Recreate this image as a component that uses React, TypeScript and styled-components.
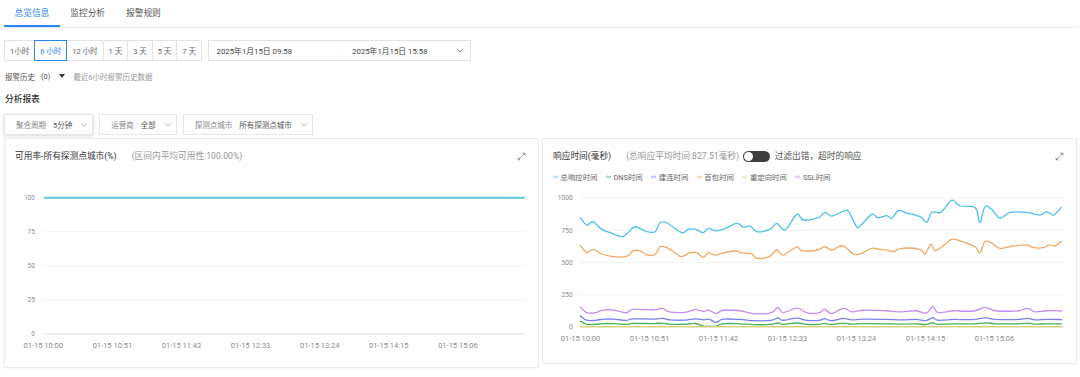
import React from "react";
import styled, { createGlobalStyle } from "styled-components";

const BLUE = "#2b87f0";

const GlobalStyle = createGlobalStyle`
  html, body { margin: 0; padding: 0; background: #fff; }
  body { font-family: Roboto, "Noto Sans CJK SC", "Noto Sans", sans-serif; color: #333; }
  * { box-sizing: border-box; }
`;

const Page = styled.div`
  width: 1080px;
  height: 377px;
  padding: 0 3px 0 4px;
  overflow: hidden;
`;

const TabBar = styled.nav`
  display: flex;
  height: 28px;
  border-bottom: 1px solid #e9e9e9;
`;

const Tab = styled.div<{ $active?: boolean }>`
  height: 27px;
  padding: 0 10.5px;
  line-height: 27px;
  font-size: 8.7px;
  color: ${(p) => (p.$active ? BLUE : "#555")};
  box-shadow: ${(p) => (p.$active ? `inset 0 -2px 0 ${BLUE}` : "none")};
`;

const TimeRow = styled.div`
  display: flex;
  align-items: center;
  gap: 5.7px;
  margin-top: 12px;
`;

const ButtonGroup = styled.div`
  display: flex;
`;

const RangeButton = styled.button<{ $active?: boolean }>`
  height: 21px;
  padding: 0 5px;
  margin: 0 0 0 -1px;
  border: 1px solid ${(p) => (p.$active ? BLUE : "#e3e3e3")};
  background: #fff;
  font-family: inherit;
  font-size: 7.5px;
  color: ${(p) => (p.$active ? BLUE : "#666")};
  position: relative;
  z-index: ${(p) => (p.$active ? 1 : 0)};
  white-space: nowrap;
  &:first-child {
    margin-left: 0;
  }
`;

const DatePicker = styled.div`
  display: flex;
  align-items: center;
  width: 263px;
  height: 21px;
  padding: 0 6.5px 0 8px;
  border: 1px solid #e3e3e3;
  font-size: 7.8px;
  color: #444;
  white-space: nowrap;
`;

const DateText = styled.span<{ $w?: number }>`
  width: ${(p) => (p.$w ? `${p.$w}px` : "auto")};
`;

const DateSep = styled.span`
  width: 14.5px;
  color: #d8d8d8;
`;

const ChevronBox = styled.span<{ $ml?: string; $color?: string }>`
  display: flex;
  margin-left: ${(p) => p.$ml ?? "0"};
  color: ${(p) => p.$color ?? "#999"};
`;

const AlertRow = styled.div`
  display: flex;
  align-items: center;
  height: 12px;
  margin-top: 9px;
  padding-left: 1px;
  font-size: 7.5px;
  color: #555;
  white-space: nowrap;
`;

const AlertCount = styled.span`
  margin-left: 6px;
`;

const Caret = styled.span`
  width: 0;
  height: 0;
  margin-left: 9px;
  border-left: 3.5px solid transparent;
  border-right: 3.5px solid transparent;
  border-top: 4px solid #333;
`;

const AlertHint = styled.span`
  margin-left: 7.8px;
  color: #999;
`;

const SectionTitle = styled.h3`
  margin: 11px 0 0 1px;
  height: 13px;
  line-height: 13px;
  font-size: 8.7px;
  font-weight: 500;
  color: #333;
`;

const FilterRow = styled.div`
  display: flex;
  gap: 6px;
  margin-top: 8px;
`;

const FilterBox = styled.div<{ $raised?: boolean }>`
  display: flex;
  align-items: center;
  height: 21px;
  padding: 0 5px 0 11px;
  border: 1px solid #e6e6e6;
  background: #fff;
  font-size: 7.5px;
  white-space: nowrap;
  box-shadow: ${(p) => (p.$raised ? "0 1px 4px rgba(0,0,0,0.16)" : "none")};
`;

const FilterLabel = styled.span`
  color: #888;
`;

const FilterValue = styled.span`
  margin-left: 7px;
  color: #555;
`;

const CardGrid = styled.div`
  display: grid;
  grid-template-columns: 1fr 1fr;
  column-gap: 3px;
  margin-top: 3px;
  align-items: start;
`;

const Card = styled.section<{ $pb: number }>`
  border: 1px solid #ebebeb;
  border-radius: 2px;
  background: #fff;
  box-shadow: 0 1px 3px rgba(0, 0, 0, 0.04);
  padding-bottom: ${(p) => p.$pb}px;
`;

const CardHeader = styled.div`
  display: flex;
  align-items: center;
  height: 14px;
  margin: 10px 12px 0 10px;
  font-size: 8.7px;
  line-height: 14px;
  white-space: nowrap;
`;

const CardTitle = styled.span`
  color: #333;
`;

const CardNote = styled.span`
  margin-left: 15px;
  color: #999;
`;

const Toggle = styled.span`
  display: flex;
  align-items: center;
  width: 27px;
  height: 11px;
  margin-left: 4px;
  padding: 1px;
  border-radius: 6px;
  background: #3f3f3f;
`;

const Knob = styled.span`
  width: 9px;
  height: 9px;
  border-radius: 50%;
  background: #fff;
`;

const ToggleText = styled.span`
  margin-left: 4.5px;
  color: #555;
`;

const ExpandButton = styled.span`
  display: flex;
  margin-left: auto;
  color: #9a9a9a;
`;

const Legend = styled.div`
  display: flex;
  align-items: center;
  gap: 8.5px;
  height: 11px;
  margin: 8px 0 0 10px;
  font-size: 7.4px;
  color: #666;
  white-space: nowrap;
`;

const LegendItem = styled.span`
  display: flex;
  align-items: center;
`;

const LegendMark = styled.svg`
  margin-right: 2.5px;
`;

const ChartSvg = styled.svg`
  display: block;
`;

const AxisText = styled.text<{ $size: number }>`
  font-family: Roboto, "Noto Sans", sans-serif;
  font-size: ${(p) => p.$size}px;
  fill: #8a8a8a;
`;

/* ---------- icons ---------- */

const Chevron = ({ w = 6, h = 4 }: { w?: number; h?: number }) => (
  <svg width={w} height={h} viewBox="0 0 6 4" fill="none">
    <polyline points="0.5,0.6 3,3.2 5.5,0.6" stroke="currentColor" strokeWidth="0.8" strokeLinecap="round" strokeLinejoin="round" />
  </svg>
);

const ExpandIcon = () => (
  <svg width="9" height="9" viewBox="0 0 9 9" fill="none">
    <line x1="2" y1="7" x2="7" y2="2" stroke="currentColor" strokeWidth="0.9" />
    <polygon points="8.3,0.7 8.3,4 5,0.7" fill="currentColor" />
    <polygon points="0.7,8.3 0.7,5 4,8.3" fill="currentColor" />
  </svg>
);

const WaveMark = ({ color }: { color: string }) => (
  <LegendMark width="5" height="4" viewBox="0 0 5 4" fill="none">
    <path d="M0.4,3 C1.2,0.4 2,0.6 2.5,2 C3,3.4 3.8,3.6 4.6,1" stroke={color} strokeWidth="0.9" strokeLinecap="round" />
  </LegendMark>
);

/* ---------- chart helpers ---------- */

type P = [number, number];

function smoothPath(pts: P[]): string {
  if (!pts.length) return "";
  let d = `M${pts[0][0].toFixed(2)},${pts[0][1].toFixed(2)}`;
  for (let i = 0; i < pts.length - 1; i++) {
    const p0 = pts[i - 1] || pts[i];
    const p1 = pts[i];
    const p2 = pts[i + 1];
    const p3 = pts[i + 2] || p2;
    const c1x = p1[0] + (p2[0] - p0[0]) / 6;
    const c1y = p1[1] + (p2[1] - p0[1]) / 6;
    const c2x = p2[0] - (p3[0] - p1[0]) / 6;
    const c2y = p2[1] - (p3[1] - p1[1]) / 6;
    d += ` C${c1x.toFixed(2)},${c1y.toFixed(2)} ${c2x.toFixed(2)},${c2y.toFixed(2)} ${p2[0].toFixed(2)},${p2[1].toFixed(2)}`;
  }
  return d;
}

const X_LABELS = ["01-15 10:00", "01-15 10:51", "01-15 11:42", "01-15 12:33", "01-15 13:24", "01-15 14:15", "01-15 15:06"];

/* total response (page x, ms) */
const TOTAL: P[] = [
  [580, 850], [586.7, 790], [593, 816], [601.7, 757], [611, 730], [621.7, 700], [628, 730], [635, 777], [646.7, 739],
  [655, 739], [660, 808], [666.7, 808], [681.7, 731], [688.3, 757], [696, 757], [703, 731], [708.3, 765], [715, 746],
  [723, 757], [736.7, 803], [743.3, 773], [750, 783], [756.7, 739], [770, 757], [776.7, 803], [785, 752], [796.7, 873],
  [803.3, 829], [818.3, 847], [825, 889], [831.7, 860], [845, 902], [849, 890], [856.7, 777], [861, 790], [871.7, 873],
  [878.3, 847], [886.7, 863], [891.7, 843], [898.3, 902], [906, 885], [920, 855], [926.7, 811], [931.7, 889], [941, 890],
  [951.7, 983], [960, 938], [973.3, 933], [977, 900], [980, 808], [985, 933], [991.7, 910], [1000, 843], [1010, 889],
  [1026.7, 889], [1040, 868], [1046.7, 894], [1053.3, 868], [1061.7, 930],
];

const FIRST_PKG: P[] = [
  [580, 636], [586.7, 576], [593.3, 602], [601.7, 566], [613.3, 545], [626.7, 548], [633.3, 591], [640, 592], [646.7, 560],
  [655, 562], [660, 622], [666.7, 615], [676.7, 566], [681.7, 545], [690, 576], [696.7, 576], [703.3, 540], [708.3, 576],
  [715, 558], [723, 575], [736.7, 591], [740, 576], [751.7, 566], [756.7, 532], [770, 550], [776.7, 597], [783.3, 558],
  [796.7, 622], [801.7, 591], [816.7, 595], [825, 622], [831.7, 595], [840, 628], [845, 622], [853.3, 566], [860, 566],
  [871.7, 610], [880, 602], [886.7, 598], [893.3, 584], [901.7, 610], [920, 602], [925, 566], [930.7, 641], [935, 591],
  [941.7, 620], [951.7, 680], [960, 667], [975, 622], [980, 576], [985, 662], [991.7, 650], [1000, 610], [1013.3, 628],
  [1026.7, 636], [1033.3, 615], [1043.3, 615], [1048.3, 636], [1055, 628], [1061.7, 667],
];

const SSL: P[] = [
  [580, 158], [586.6, 112], [595, 110], [603.8, 132], [614, 130], [626, 110], [633, 136], [654, 132], [662.4, 145],
  [669.3, 118], [685, 114], [695, 134], [704, 120], [709, 130], [716, 104], [723, 130], [740, 126], [753.8, 104],
  [771, 110], [778, 152], [783, 112], [797, 147], [807, 110], [819, 110], [824.5, 139], [831.4, 104], [843.4, 145],
  [852, 118], [864, 130], [885, 126], [902, 118], [916, 126], [926, 107], [933, 157], [938, 112], [954, 126],
  [964, 122], [975, 126], [985, 152], [995, 126], [1009, 122], [1019, 126], [1028, 145], [1035, 118], [1047, 126],
  [1062, 124],
];

const CONNECT: P[] = SSL.map(([x, v], i) => [x, i === 0 ? 88 : x > 712 && x < 720 ? 36 : v * 0.45 + 2]);
const DNS: P[] = SSL.map(([x, v], i) => [x, i === 0 ? 48 : x > 700 && x < 720 ? 6 : Math.max(8, v * 0.3 - 13)]);
const REDIRECT: P[] = [[580, 3], [1062, 3]];

const rx = (px: number) => px - 543;
const ry = (v: number) => 145 - v * 0.129;
const toR = (pts: P[]): P[] => pts.map(([x, v]) => [rx(x), ry(v)]);

const SERIES = [
  { name: "总响应时间", color: "#4fc1ee", pts: TOTAL },
  { name: "DNS时间", color: "#47b15e", pts: DNS },
  { name: "建连时间", color: "#7b80ee", pts: CONNECT },
  { name: "首包时间", color: "#f2a861", pts: FIRST_PKG },
  { name: "重定向时间", color: "#d6d46b", pts: REDIRECT },
  { name: "SSL时间", color: "#c68cf2", pts: SSL },
];

const AvailabilityChart = () => {
  const ys = [100, 75, 50, 25, 0];
  const y = (v: number) => 171 - v * 1.363;
  return (
    <ChartSvg width="533" height="200" viewBox="0 0 533 200">
      {ys.map((v) => (
        <g key={v}>
          <line x1="38.8" x2="519.8" y1={y(v)} y2={y(v)} stroke={v === 0 ? "#e0e0e0" : "#f3f3f3"} strokeWidth="1" />
          <AxisText $size={6.6} x="30" y={y(v)} dy="0.35em" textAnchor="end">
            {v}
          </AxisText>
        </g>
      ))}
      <line x1="38.8" x2="519.8" y1={y(100)} y2={y(100)} stroke="#5cc6e6" strokeWidth="2" />
      {X_LABELS.map((t, i) => (
        <AxisText key={t} $size={7.5} x={38.3 + 69.1 * i} y="182" dy="0.35em" textAnchor="middle">
          {t}
        </AxisText>
      ))}
    </ChartSvg>
  );
};

const ResponseChart = () => {
  const ys = [1000, 750, 500, 250, 0];
  return (
    <ChartSvg width="533" height="176" viewBox="0 0 533 176">
      {ys.map((v) => (
        <g key={v}>
          <line x1="37" x2="521" y1={ry(v)} y2={ry(v)} stroke={v === 0 ? "#e0e0e0" : "#f3f3f3"} strokeWidth="1" />
          <AxisText $size={6.6} x="29.7" y={ry(v)} dy="0.35em" textAnchor="end">
            {v}
          </AxisText>
        </g>
      ))}
      {SERIES.map((s) => (
        <path key={s.name} d={smoothPath(toR(s.pts))} fill="none" stroke={s.color} strokeWidth="1.3" strokeLinejoin="round" />
      ))}
      {X_LABELS.map((t, i) => (
        <AxisText key={t} $size={7.5} x={37.5 + 69 * i} y="156" dy="0.35em" textAnchor="middle">
          {t}
        </AxisText>
      ))}
    </ChartSvg>
  );
};

const RANGES = ["1小时", "6 小时", "12 小时", "1 天", "3 天", "5 天", "7 天"];

export default function App() {
  return (
    <Page>
      <GlobalStyle />
      <TabBar>
        <Tab $active>总览信息</Tab>
        <Tab>监控分析</Tab>
        <Tab>报警规则</Tab>
      </TabBar>

      <TimeRow>
        <ButtonGroup>
          {RANGES.map((r) => (
            <RangeButton key={r} $active={r === "6 小时"}>
              {r}
            </RangeButton>
          ))}
        </ButtonGroup>
        <DatePicker>
          <DateText $w={121}>2025年1月15日 09:58</DateText>
          <DateSep>-</DateSep>
          <DateText>2025年1月15日 15:58</DateText>
          <ChevronBox $ml="auto" $color="#555">
            <Chevron />
          </ChevronBox>
        </DatePicker>
      </TimeRow>

      <AlertRow>
        <span>报警历史</span>
        <AlertCount>(0)</AlertCount>
        <Caret />
        <AlertHint>最近6小时报警历史数据</AlertHint>
      </AlertRow>

      <SectionTitle>分析报表</SectionTitle>

      <FilterRow>
        <FilterBox $raised>
          <FilterLabel>聚合周期</FilterLabel>
          <FilterValue>5分钟</FilterValue>
          <ChevronBox $ml="9px" $color="#aaa">
            <Chevron />
          </ChevronBox>
        </FilterBox>
        <FilterBox>
          <FilterLabel>运营商</FilterLabel>
          <FilterValue>全部</FilterValue>
          <ChevronBox $ml="9px" $color="#aaa">
            <Chevron />
          </ChevronBox>
        </FilterBox>
        <FilterBox>
          <FilterLabel>探测点城市</FilterLabel>
          <FilterValue>所有探测点城市</FilterValue>
          <ChevronBox $ml="9px" $color="#aaa">
            <Chevron />
          </ChevronBox>
        </FilterBox>
      </FilterRow>

      <CardGrid>
        <Card $pb={4}>
          <CardHeader>
            <CardTitle>可用率-所有探测点城市(%)</CardTitle>
            <CardNote>(区间内平均可用性:100.00%)</CardNote>
            <ExpandButton>
              <ExpandIcon />
            </ExpandButton>
          </CardHeader>
          <AvailabilityChart />
        </Card>

        <Card $pb={5}>
          <CardHeader>
            <CardTitle>响应时间(毫秒)</CardTitle>
            <CardNote>(总响应平均时间:827.51毫秒)</CardNote>
            <Toggle>
              <Knob />
            </Toggle>
            <ToggleText>过滤出错，超时的响应</ToggleText>
            <ExpandButton>
              <ExpandIcon />
            </ExpandButton>
          </CardHeader>
          <Legend>
            {SERIES.map((s) => (
              <LegendItem key={s.name}>
                <WaveMark color={s.color} />
                {s.name}
              </LegendItem>
            ))}
          </Legend>
          <ResponseChart />
        </Card>
      </CardGrid>
    </Page>
  );
}
